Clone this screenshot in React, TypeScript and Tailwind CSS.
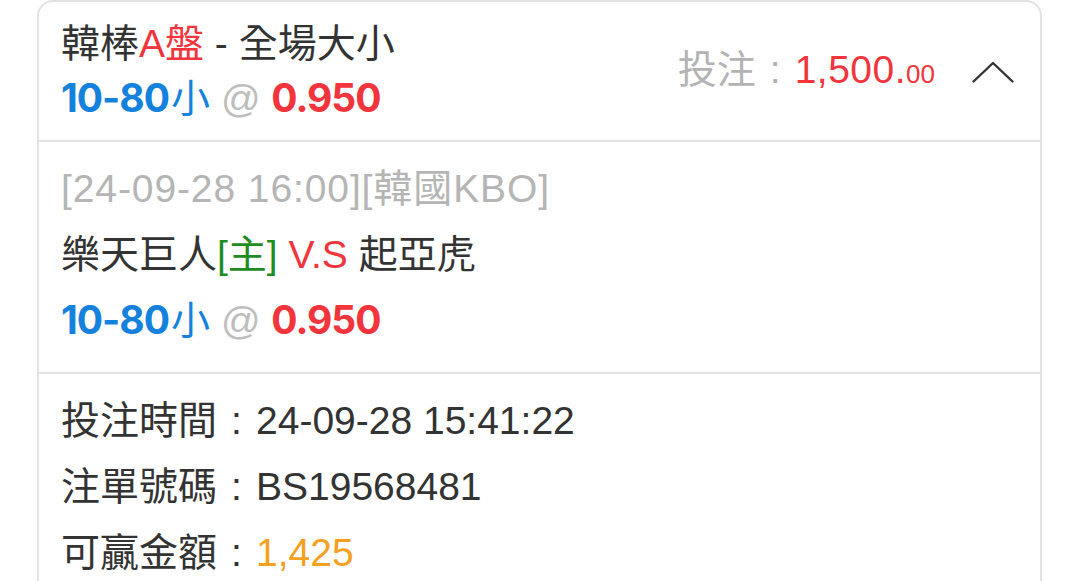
import React from "react";

const font = { fontFamily: '"Liberation Sans", "Noto Sans CJK TC", sans-serif' };
const boldNum = { fontFamily: 'Inter, "Liberation Sans", sans-serif' };

function Colon() {
  return <span className="inline-block w-[1em] text-center">:</span>;
}

function Odds() {
  return (
    <div>
      <span className="text-[#1482dc] font-bold leading-none tracking-[-1px]" style={boldNum}>10-80</span>
      <span className="text-[#1482dc] ml-[2px]">小</span>
      <span className="text-[#bdbdbd]"> @ </span>
      <span className="text-[#f2353d] font-bold leading-none tracking-[-1px]" style={boldNum}>0.950</span>
    </div>
  );
}

export default function App() {
  return (
    <div lang="zh-Hant-TW" className="w-[1080px] h-[581px] bg-white overflow-hidden" style={font}>
      <div className="ml-[37px] w-[1005px] border-2 border-b-0 border-[#e2e2e2] rounded-t-[16px] text-[39px] text-[#333333]">
        {/* Header */}
        <div className="flex items-center justify-between pl-[22px] pr-[26px] pt-[14px] pb-[14px]">
          <div className="leading-[55px]">
            <div>
              韓棒<span className="text-[#f2353d]">A盤</span> - 全場大小
            </div>
            <Odds />
          </div>
          <div className="flex items-center gap-[37px] mt-[-2px]">
            <div className="flex items-baseline">
              <span className="text-[#b3b3b3]">投注<Colon /></span>
              <span className="text-[#f2353d] tracking-[0.5px]">1,500.</span>
              <span className="text-[#f2353d] text-[26px]">00</span>
            </div>
            <svg width="42" height="22" viewBox="0 0 42 22" fill="none" className="mt-[4px]">
              <path d="M1.5 20.5 L21 2 L40.5 20.5" stroke="#333333" strokeWidth="2.4" strokeLinecap="round" strokeLinejoin="round" />
            </svg>
          </div>
        </div>
        <div className="h-[2px] bg-[#e2e2e2]" />
        {/* Match section */}
        <div className="pl-[22px] pt-[14px] pb-[18px] leading-[66px]">
          <div className="text-[#b5b5b5] tracking-[0.9px]">[24-09-28 16:00][韓國KBO]</div>
          <div>
            樂天巨人<span className="text-[#1f8c1f]">[主]</span>
            <span className="text-[#f2353d]"> V.S </span>起亞虎
          </div>
          <Odds />
        </div>
        <div className="h-[2px] bg-[#e2e2e2]" />
        {/* Details */}
        <div className="pl-[22px] pt-[14px] pb-[18px] leading-[66px]">
          <div>投注時間<Colon />24-09-28 15:41:22</div>
          <div>注單號碼<Colon />BS19568481</div>
          <div>
            可贏金額<Colon /><span className="text-[#f5a01f]">1,425</span>
          </div>
        </div>
      </div>
    </div>
  );
}
